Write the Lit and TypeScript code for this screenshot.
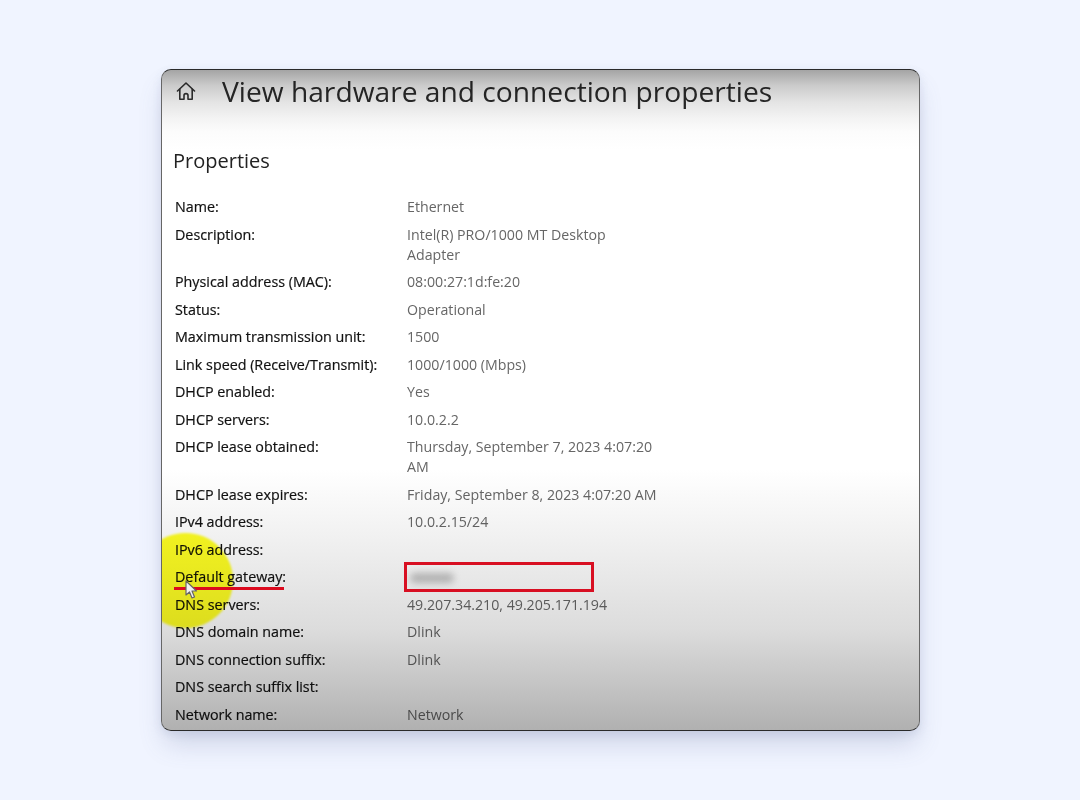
import { LitElement, html, css, svg } from "lit";
import { customElement } from "lit/decorators.js";

const ROWS: [string, string][] = [
  ["Name:", "Ethernet"],
  ["Description:", "Intel(R) PRO/1000 MT Desktop Adapter"],
  ["Physical address (MAC):", "08:00:27:1d:fe:20"],
  ["Status:", "Operational"],
  ["Maximum transmission unit:", "1500"],
  ["Link speed (Receive/Transmit):", "1000/1000 (Mbps)"],
  ["DHCP enabled:", "Yes"],
  ["DHCP servers:", "10.0.2.2"],
  ["DHCP lease obtained:", "Thursday, September 7, 2023 4:07:20 AM"],
  ["DHCP lease expires:", "Friday, September 8, 2023 4:07:20 AM"],
  ["IPv4 address:", "10.0.2.15/24"],
  ["IPv6 address:", ""],
  ["Default gateway:", "BLUR"],
  ["DNS servers:", "49.207.34.210, 49.205.171.194"],
  ["DNS domain name:", "Dlink"],
  ["DNS connection suffix:", "Dlink"],
  ["DNS search suffix list:", ""],
  ["Network name:", "Network"],
];

@customElement("app-root")
export class AppRoot extends LitElement {
  static styles = css`
    :host {
      display: block;
      width: 1080px;
      height: 800px;
      background: #f0f4ff;
      padding: 69px 160px 0 161px;
      box-sizing: border-box;
      font-family: "Open Sans", "Noto Sans", sans-serif;
    }
    .card {
      position: relative;
      width: 759px;
      height: 662px;
      box-sizing: border-box;
      border: 1px solid #2a2a2a;
      border-right-color: #666;
      border-left-color: #666;
      border-radius: 10px;
      overflow: hidden;
      background: #fff;
      box-shadow: 0 16px 26px -4px rgba(90, 105, 150, 0.24), 0 3px 10px rgba(90, 105, 150, 0.12);
    }
    .head {
      display: flex;
      align-items: center;
      height: 42px;
      padding: 0 0 2px 12px;
    }
    .home {
      width: 24px;
      height: 24px;
      flex: none;
      filter: blur(0.4px);
    }
    h1 {
      margin: 0 0 0 24px;
      font-size: 28.2px;
      font-weight: 400;
      line-height: 42px;
      color: #2b2b2b;
      white-space: nowrap;
      filter: blur(0.4px);
    }
    h2 {
      margin: 33px 0 0 11px;
      font-size: 20px;
      font-weight: 400;
      line-height: 28px;
      color: #222;
      filter: blur(0.4px);
    }
    .rows {
      margin: 22px 0 0 13px;
      display: grid;
      grid-template-columns: 232px 254px;
      row-gap: 7.5px;
      line-height: 20px;
      filter: blur(0.45px);
    }
    .label {
      color: #111;
      white-space: nowrap;
      font-size: 14.3px;
      -webkit-text-stroke: 0.2px #111;
    }
    .value { color: #666; font-size: 14.2px; }
    .blur {
      display: block;
      width: 44px;
      height: 10px;
      margin: 6px 0 0 3px;
      background: #c4c4c4;
      border-radius: 5px;
      filter: blur(3.5px);
    }
    .shade {
      position: absolute;
      inset: 0;
      pointer-events: none;
      mix-blend-mode: multiply;
      background: linear-gradient(
        to bottom,
        #a4a4a4 0,
        #cccccc 16px,
        #e4e4e4 32px,
        #f3f3f3 48px,
        #fcfcfc 62px,
        #ffffff 80px,
        #ffffff 400px,
        #eeeeee 480px,
        #dcdcdc 560px,
        #b0b0b0 661px
      );
    }
    .spot {
      position: absolute;
      left: -24px;
      top: 463px;
      width: 95px;
      height: 95px;
      border-radius: 50%;
      background: #ffff22;
      filter: blur(1.2px);
      mix-blend-mode: multiply;
    }
    .underline {
      position: absolute;
      left: 12px;
      top: 517px;
      width: 110px;
      height: 2.5px;
      background: #dc0a1e;
    }
    .box {
      position: absolute;
      left: 242px;
      top: 492px;
      width: 190px;
      height: 30px;
      box-sizing: border-box;
      border: 3px solid #d80f22;
    }
    .cursor {
      position: absolute;
      left: 23px;
      top: 510px;
      width: 14px;
      height: 20px;
      filter: blur(0.5px);
    }
  `;

  render() {
    return html`
      <div class="card">
        <div class="head">
          <svg class="home" viewBox="0 0 24 24" fill="none" stroke="#333" stroke-width="1.6" stroke-linejoin="round" stroke-linecap="round">
            ${svg`<path d="M3.5 12 12 4l8.5 8" /><path d="M5.8 10.2v10h4.2v-3.6a2 2 0 0 1 4 0v3.6h4.2v-10" />`}
          </svg>
          <h1>View hardware and connection properties</h1>
        </div>
        <h2>Properties</h2>
        <div class="rows">
          ${ROWS.map(
            ([l, v]) => html`
              <div class="label">${l}</div>
              <div class="value">${v === "BLUR" ? html`<span class="blur"></span>` : v}</div>
            `
          )}
        </div>
        <div class="shade"></div>
        <div class="spot"></div>
        <div class="underline"></div>
        <div class="box"></div>
        <svg class="cursor" viewBox="0 0 14 20">
          <path d="M1 1v14l3.5-3 2.5 6 2.5-1-2.5-6h4.5z" fill="#f2f2f2" stroke="#666" stroke-width="1.2" stroke-linejoin="round" />
        </svg>
      </div>
    `;
  }
}
